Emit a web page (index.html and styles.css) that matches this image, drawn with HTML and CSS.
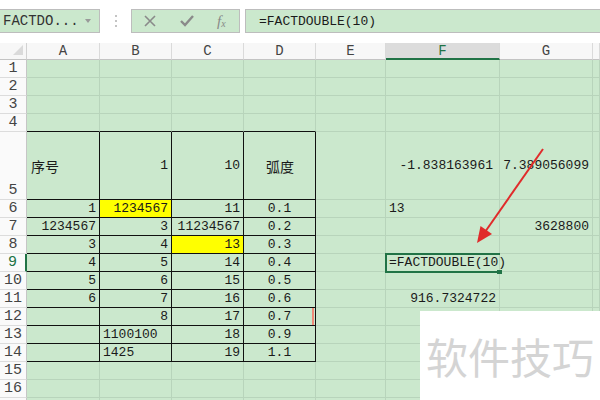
FILE: index.html
```html
<!DOCTYPE html>
<html>
<head>
<meta charset="utf-8">
<link rel="stylesheet" href="styles.css">
</head>
<body>
<div class="toolbar">
  <div class="namebox"><span class="nbtext">FACTDO...</span><span class="dd"></span></div>
  <div class="dots"><i></i><i></i><i></i></div>
  <div class="btnbox">
    <svg class="ico" width="14" height="14" viewBox="0 0 14 14"><path d="M2 2 L12 12 M12 2 L2 12" stroke="#8a8a8a" stroke-width="1.6" fill="none"/></svg>
    <svg class="ico" width="16" height="14" viewBox="0 0 16 14"><path d="M2 7 L6 11 L14 2" stroke="#8a8a8a" stroke-width="2.4" fill="none"/></svg>
    <span class="fx">f<sub>x</sub></span>
  </div>
  <div class="formula">=FACTDOUBLE(10)</div>
</div>

<div class="sheet">
  <div class="corner"><svg width="12" height="12" viewBox="0 0 12 12"><path d="M11 1 L11 11 L1 11 Z" fill="#dadada"/></svg></div>
  <div class="h">A</div><div class="h">B</div><div class="h">C</div><div class="h">D</div><div class="h">E</div><div class="h hs">F</div><div class="h">G</div><div class="h"></div>

  <div class="rh">1</div><div class="c"></div><div class="c"></div><div class="c"></div><div class="c"></div><div class="c"></div><div class="c"></div><div class="c"></div><div class="c"></div>
  <div class="rh">2</div><div class="c"></div><div class="c"></div><div class="c"></div><div class="c"></div><div class="c"></div><div class="c"></div><div class="c"></div><div class="c"></div>
  <div class="rh">3</div><div class="c"></div><div class="c"></div><div class="c"></div><div class="c"></div><div class="c"></div><div class="c"></div><div class="c"></div><div class="c"></div>
  <div class="rh">4</div><div class="c tt"></div><div class="c tt"></div><div class="c tt"></div><div class="c tt"></div><div class="c"></div><div class="c"></div><div class="c"></div><div class="c"></div>

  <div class="rh rb">5</div><div class="c t cjk">序号</div><div class="c t r">1</div><div class="c t r">10</div><div class="c t m cjk">弧度</div><div class="c"></div><div class="c r pr">-1.838163961</div><div class="c r">7.389056099</div><div class="c"></div>

  <div class="rh">6</div><div class="c t r">1</div><div class="c t r yl">1234567</div><div class="c t r">11</div><div class="c t m">0.1</div><div class="c"></div><div class="c">13</div><div class="c"></div><div class="c"></div>
  <div class="rh">7</div><div class="c t r">1234567</div><div class="c t r">3</div><div class="c t r">11234567</div><div class="c t m">0.2</div><div class="c"></div><div class="c"></div><div class="c r">3628800</div><div class="c"></div>
  <div class="rh">8</div><div class="c t r">3</div><div class="c t r">4</div><div class="c t r yl">13</div><div class="c t m">0.3</div><div class="c"></div><div class="c"></div><div class="c"></div><div class="c"></div>
  <div class="rh rs">9</div><div class="c t r">4</div><div class="c t r">5</div><div class="c t r">14</div><div class="c t m">0.4</div><div class="c"></div><div class="c act"><span class="sel"></span><span class="fh"></span>=FACTDOUBLE(10)<span class="caret"></span></div><div class="c"></div><div class="c"></div>
  <div class="rh">10</div><div class="c t r">5</div><div class="c t r">6</div><div class="c t r">15</div><div class="c t m">0.5</div><div class="c"></div><div class="c"></div><div class="c"></div><div class="c"></div>
  <div class="rh">11</div><div class="c t r">6</div><div class="c t r">7</div><div class="c t r">16</div><div class="c t m">0.6</div><div class="c"></div><div class="c r">916.7324722</div><div class="c"></div><div class="c"></div>
  <div class="rh">12</div><div class="c t"></div><div class="c t r">8</div><div class="c t r">17</div><div class="c t m mark">0.7</div><div class="c"></div><div class="c"></div><div class="c"></div><div class="c"></div>
  <div class="rh">13</div><div class="c t"></div><div class="c t">1100100</div><div class="c t r">18</div><div class="c t m">0.9</div><div class="c"></div><div class="c"></div><div class="c"></div><div class="c"></div>
  <div class="rh">14</div><div class="c t"></div><div class="c t">1425</div><div class="c t r">19</div><div class="c t m">1.1</div><div class="c"></div><div class="c"></div><div class="c"></div><div class="c"></div>
  <div class="rh">15</div><div class="c"></div><div class="c"></div><div class="c"></div><div class="c"></div><div class="c"></div><div class="c"></div><div class="c"></div><div class="c"></div>
  <div class="rh">16</div><div class="c"></div><div class="c"></div><div class="c"></div><div class="c"></div><div class="c"></div><div class="c"></div><div class="c"></div><div class="c"></div>
  <div class="rh"></div><div class="c"></div><div class="c"></div><div class="c"></div><div class="c"></div><div class="c"></div><div class="c"></div><div class="c"></div><div class="c"></div>
</div>

<svg class="arrow" width="600" height="400" viewBox="0 0 600 400">
  <line x1="543" y1="149" x2="485" y2="232" stroke="#e02b2b" stroke-width="2"/>
  <polygon points="477,243 492,234 480.5,226" fill="#e02b2b"/>
</svg>

<div class="watermark">软件技巧</div>
</body>
</html>
```

FILE: styles.css
```css
html, body {
  margin: 0;
  padding: 0;
}
body {
  width: 600px;
  height: 400px;
  overflow: hidden;
  background: #ffffff;
  position: relative;
  font-family: "Liberation Mono", "DejaVu Sans Mono", monospace;
  color: #1a1a1a;
}

/* toolbar */
.toolbar {
  height: 43px;
  box-sizing: border-box;
  padding-top: 9px;
  display: flex;
  align-items: flex-start;
}
.namebox {
  width: 101px;
  height: 24px;
  margin-left: -1px;
  box-sizing: border-box;
  border: 1px solid #bdbdbd;
  background: #cbe8cd;
  display: flex;
  align-items: center;
  padding-left: 3px;
  font-size: 14px;
  color: #333;
}
.nbtext {
  flex: 1;
}
.dd {
  width: 0;
  height: 0;
  border-left: 3.5px solid transparent;
  border-right: 3.5px solid transparent;
  border-top: 4px solid #9a9a9a;
  margin-right: 8px;
}
.dots {
  width: 31px;
  height: 24px;
  display: flex;
  flex-direction: column;
  align-items: center;
  justify-content: center;
  gap: 3px;
}
.dots i {
  display: block;
  width: 2px;
  height: 2px;
  background: #c4c4c4;
}
.btnbox {
  width: 109px;
  height: 24px;
  box-sizing: border-box;
  border: 1px solid #bdbdbd;
  background: #cbe8cd;
  display: flex;
  align-items: center;
  padding-left: 11px;
}
.btnbox .ico {
  display: block;
}
.btnbox .ico + .ico {
  margin-left: 22px;
}
.fx {
  margin-left: 22px;
  font-family: "Liberation Serif", serif;
  font-style: italic;
  font-size: 15px;
  color: #888;
  line-height: 1;
}
.fx sub {
  font-size: 10px;
  vertical-align: -1px;
}
.formula {
  margin-left: 5px;
  flex: 1;
  height: 24px;
  box-sizing: border-box;
  border: 1px solid #bdbdbd;
  border-right: none;
  background: #cbe8cd;
  display: flex;
  align-items: center;
  padding-left: 13px;
  font-size: 13px;
  color: #1a1a1a;
}

/* sheet */
.sheet {
  display: grid;
  grid-template-columns: 27px 73px 72px 72px 72px 70px 114px 93px 1fr;
  grid-template-rows: 17px repeat(4, 18px) 68px repeat(12, 18px);
}
.corner {
  background: #f7f7f7;
  border-right: 1px solid #d2d2d2;
  border-bottom: 1px solid #c3c3c3;
  box-sizing: border-box;
  display: flex;
  justify-content: flex-end;
  align-items: flex-end;
  padding: 0 2px 3px 0;
}
.corner svg {
  display: block;
}
.h {
  background: #f7f7f7;
  border-right: 1px solid #dadada;
  border-bottom: 1px solid #c3c3c3;
  box-sizing: border-box;
  display: flex;
  align-items: center;
  justify-content: center;
  font-size: 14px;
  color: #444;
}
.hs {
  background: #dcdcdc;
  color: #217346;
  border-bottom: 2px solid #217346;
}
.rh {
  background: #fafafa;
  border-right: 1px solid #c6c6c6;
  border-bottom: 1px solid #dcdcdc;
  box-sizing: border-box;
  display: flex;
  align-items: center;
  justify-content: center;
  font-size: 15px;
  color: #444;
}
.rb {
  align-items: flex-end;
}
.rs {
  color: #217346;
  border-right: 2px solid #217346;
}
.c {
  background: #cbe8cd;
  border-right: 1px solid #b8d4bb;
  border-bottom: 1px solid #b8d4bb;
  box-sizing: border-box;
  display: flex;
  align-items: center;
  padding: 0 3px;
  font-size: 13px;
  white-space: nowrap;
  color: #1a1a1a;
  min-width: 0;
}
.t {
  border-right-color: #111;
  border-bottom-color: #111;
}
.tt {
  border-bottom-color: #111;
}
.r {
  justify-content: flex-end;
}
.m {
  justify-content: center;
}
.pr {
  padding-right: 6px;
}
.cjk {
  font-family: "Noto Sans CJK SC", "Noto Sans", sans-serif;
  font-size: 14px;
  padding-left: 4px;
}
.yl {
  background: #ffff00;
}
.mark {
  position: relative;
}
.mark::after {
  content: "";
  position: absolute;
  right: 1px;
  top: 0;
  width: 2px;
  height: 17px;
  background: #f08a78;
}
.act {
  position: relative;
  overflow: visible;
  z-index: 2;
}
.sel {
  position: absolute;
  left: -1px;
  top: -1px;
  width: 115px;
  height: 20px;
  box-sizing: border-box;
  border: 2px solid #217346;
  border-right: none;
}
.fh {
  position: absolute;
  left: 111px;
  top: 16px;
  width: 5px;
  height: 4px;
  background: #217346;
}
.caret {
  display: inline-block;
  width: 1px;
  height: 16px;
  background: #111;
  margin-left: 3px;
}

/* overlays */
.arrow {
  position: absolute;
  left: 0;
  top: 0;
  pointer-events: none;
  z-index: 3;
}
.watermark {
  position: absolute;
  left: 420px;
  top: 311px;
  width: 180px;
  height: 89px;
  background: #ffffff;
  box-sizing: border-box;
  padding-left: 6px;
  font-family: "Noto Sans CJK SC", sans-serif;
  font-size: 42px;
  line-height: 89px;
  color: #d4d4d4;
  white-space: nowrap;
  z-index: 4;
}
```
